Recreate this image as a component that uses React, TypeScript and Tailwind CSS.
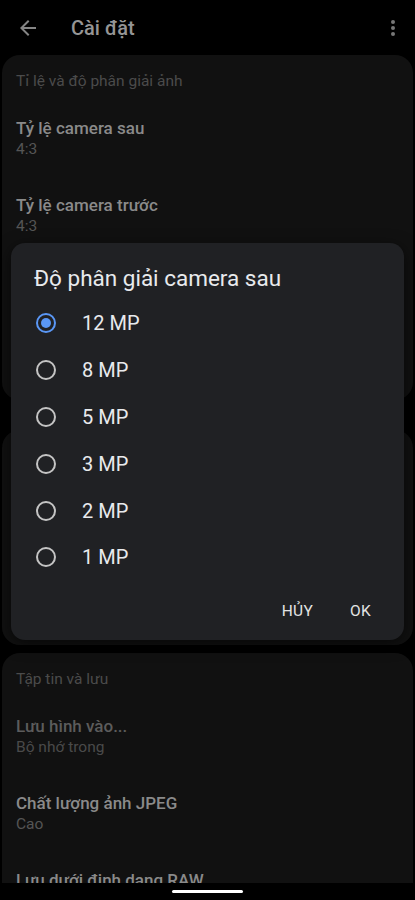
import React from "react";

const Item = ({ title, value, dim = false }: { title: string; value: string; dim?: boolean }) => (
  <div className="h-[77px] flex flex-col justify-center pl-[14px] pr-4">
    <div className={`text-[17px] leading-[22px] font-medium ${dim ? "text-[#5c5c5c]" : "text-[#8a8a8a]"}`}>{title}</div>
    <div className={`text-[15.5px] leading-[21px] ${dim ? "text-[#4a4a4a]" : "text-[#555555]"}`}>{value}</div>
  </div>
);

const Header = ({ text }: { text: string }) => (
  <div className="pt-[16px] pb-[8px] pl-[14px] pr-4 text-[15.5px] leading-[21px] text-[#4b4b4b]">{text}</div>
);

const options = ["12 MP", "8 MP", "5 MP", "3 MP", "2 MP", "1 MP"];

export default function App() {
  return (
    <div
      className="relative w-[415px] h-[900px] bg-black overflow-hidden"
      style={{ fontFamily: "Roboto, 'Noto Sans', sans-serif" }}
    >
      {/* Top bar */}
      <div className="h-[55px] flex items-center">
        <svg className="ml-[16px]" width="24" height="24" viewBox="0 0 24 24" fill="#858585">
          <path d="M20 11H7.83l5.59-5.59L12 4l-8 8 8 8 1.41-1.41L7.83 13H20v-2z" />
        </svg>
        <div className="ml-[31px] text-[20px] font-medium text-[#959595] leading-none">Cài đặt</div>
        <div className="flex-1" />
        <svg className="mr-[10px]" width="24" height="24" viewBox="0 0 24 24" fill="#777777">
          <circle cx="12" cy="6" r="2" />
          <circle cx="12" cy="12" r="2" />
          <circle cx="12" cy="18" r="2" />
        </svg>
      </div>

      {/* Card 1 */}
      <div className="mx-[2px] h-[345px] rounded-[18px] bg-[#111111] overflow-hidden">
        <Header text="Tỉ lệ và độ phân giải ảnh" />
        <Item title="Tỷ lệ camera sau" value="4:3" />
        <Item title="Tỷ lệ camera trước" value="4:3" />
        <Item title="Độ phân giải camera sau" value="12 MP" />
        <Item title="Độ phân giải camera trước" value="8 MP" />
      </div>

      {/* Card 2 */}
      <div className="mx-[2px] mt-[30px] h-[215px] rounded-[18px] bg-[#111111] overflow-hidden">
        <Header text="Chụp ảnh" />
        <Item title="Âm thanh chụp" value="Bật" />
        <Item title="Hẹn giờ" value="Tắt" />
      </div>

      {/* Card 3 */}
      <div className="mx-[2px] mt-[8px] h-[300px] rounded-t-[18px] bg-[#111111] overflow-hidden">
        <Header text="Tập tin và lưu" />
        <Item title="Lưu hình vào..." value="Bộ nhớ trong" dim />
        <Item title="Chất lượng ảnh JPEG" value="Cao" />
        <Item title="Lưu dưới định dạng RAW" value="Tắt" />
      </div>

      {/* Nav bar */}
      <div className="absolute left-0 right-0 bottom-0 h-[17px] bg-black flex items-center justify-center">
        <div className="w-[71px] h-[3px] rounded-full bg-white" />
      </div>

      {/* Dialog */}
      <div className="absolute left-[11px] top-[243px] w-[393px] h-[397px] rounded-[14px] bg-[#202124] shadow-[0_4px_16px_rgba(0,0,0,0.6)]">
        <div className="pt-[19px] pl-[23px] text-[22.5px] leading-[32px] text-[#e8eaed]">Độ phân giải camera sau</div>
        <div className="mt-[6px] flex flex-col">
          {options.map((o, i) => (
            <div key={o} className="h-[46.8px] flex items-center">
              <div className="ml-[25px] w-[20px] h-[20px] rounded-full flex items-center justify-center">
                {i === 0 ? (
                  <div className="w-[20px] h-[20px] rounded-full border-2 border-[#5a97f5] flex items-center justify-center">
                    <div className="w-[10px] h-[10px] rounded-full bg-[#5a97f5]" />
                  </div>
                ) : (
                  <div className="w-[20px] h-[20px] rounded-full border-2 border-[#c4c4c4]" />
                )}
              </div>
              <div className="ml-[26px] text-[20px] text-[#e8eaed] leading-none">{o}</div>
            </div>
          ))}
        </div>
        <div className="absolute right-[33px] bottom-[21px] flex items-center gap-[37px] text-[15.5px] text-[#e3e3e3] leading-none tracking-[0.3px]">
          <span>HỦY</span>
          <span>OK</span>
        </div>
      </div>
    </div>
  );
}
